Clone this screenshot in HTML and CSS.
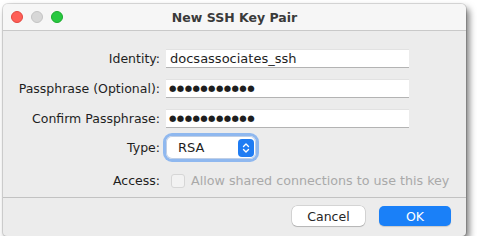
FILE: index.html
```html
<!DOCTYPE html>
<html lang="en">
<head>
  <meta charset="UTF-8">
  <title>New SSH Key Pair</title>
  <link rel="stylesheet" href="styles.css">
</head>
<body>
  <div class="window">
    <!-- Title bar -->
    <div class="titlebar">
      <div class="lights">
        <span class="light red"></span>
        <span class="light gray"></span>
        <span class="light green"></span>
      </div>
      <div class="title">New SSH Key Pair</div>
    </div>

    <!-- Form -->
    <div class="form">
      <label class="label">Identity:</label>
      <div class="field">docsassociates_ssh</div>

      <label class="label">Passphrase (Optional):</label>
      <div class="field dots">●●●●●●●●●●●</div>

      <label class="label">Confirm Passphrase:</label>
      <div class="field dots">●●●●●●●●●●●</div>

      <label class="label type-label">Type:</label>
      <div class="select-row">
        <div class="select">
          <span>RSA</span>
          <span class="stepper">
            <svg width="8" height="12" viewBox="0 0 8 12">
              <path d="M1.5 4.5 L4 2 L6.5 4.5 M1.5 7.5 L4 10 L6.5 7.5" fill="none" stroke="#fff" stroke-width="1.4" stroke-linecap="round" stroke-linejoin="round"/>
            </svg>
          </span>
        </div>
      </div>

      <label class="label access-label">Access:</label>
      <div class="check">
        <span class="box"></span>
        <span>Allow shared connections to use this key</span>
      </div>
    </div>

    <!-- Buttons -->
    <div class="footer">
      <button class="btn">Cancel</button>
      <button class="btn primary">OK</button>
    </div>
  </div>
</body>
</html>
```

FILE: styles.css
```css
* {
  margin: 0;
  padding: 0;
  box-sizing: border-box;
}
body {
  background: #fff;
  font-family: "DejaVu Sans", sans-serif;
  font-size: 12.5px;
  color: #1e1e1e;
  padding: 4px 0 0 3px;
}
.window {
  width: 463px;
  height: 232px;
  background: #ececec;
  border-radius: 5px 5px 4px 4px;
  box-shadow: 3px 4px 7px rgba(0, 0, 0, 0.55), 0 0 0 1px rgba(0, 0, 0, 0.12);
  display: flex;
  flex-direction: column;
  overflow: hidden;
}
.titlebar {
  height: 27px;
  background: #f6f6f6;
  border-bottom: 1px solid #c9c9c9;
  display: flex;
  align-items: center;
  position: relative;
}
.lights {
  display: flex;
  gap: 8px;
  padding-left: 8px;
}
.light {
  width: 12px;
  height: 12px;
  border-radius: 50%;
}
.red { background: #fe5f57; border: 1px solid #e2463f; }
.gray { background: #d7d7d7; border: 1px solid #c4c4c4; }
.green { background: #28c840; border: 1px solid #1aab2d; }
.title {
  position: absolute;
  left: 0;
  right: 0;
  text-align: center;
  font-weight: bold;
  font-size: 12.5px;
  color: #3a3a3a;
  pointer-events: none;
}
.form {
  display: grid;
  grid-template-columns: 157px 243px;
  column-gap: 6px;
  row-gap: 11px;
  padding-top: 18px;
  align-items: center;
}
.label {
  text-align: right;
  color: #1e1e1e;
  white-space: nowrap;
}
.field {
  height: 19px;
  background: #fff;
  border-top: 1px solid #e2e2e2;
  border-bottom: 1px solid #b3b3b3;
  padding: 0 4px;
  line-height: 17px;
  font-size: 13px;
}
.dots {
  font-size: 8.5px;
  letter-spacing: 0.4px;
  padding-left: 3px;
}
.type-label, .select-row {
  margin-top: -3px;
}
.select {
  width: 90px;
  height: 23px;
  border-radius: 6px;
  background: #fff;
  box-shadow: 0 0 0 3px #8fb8ef, inset 0 0 0 1px #c0cfe6;
  display: flex;
  align-items: center;
  justify-content: space-between;
  padding: 0 2px 0 12px;
  font-size: 13px;
}
.stepper {
  width: 16px;
  height: 18px;
  border-radius: 4px;
  background: #1f7cf3;
  display: flex;
  align-items: center;
  justify-content: center;
}
.access-label, .check {
  margin-top: 3px;
}
.check {
  display: flex;
  align-items: center;
  gap: 6px;
  color: #a9a9a9;
  white-space: nowrap;
  font-size: 12.7px;
}
.box {
  width: 14px;
  height: 14px;
  border: 1px solid #d6d6d6;
  border-radius: 3px;
  background: #f2f2f2;
  margin-left: 5px;
  flex-shrink: 0;
}
.footer {
  margin-top: auto;
  height: 39px;
  border-top: 1px solid #c2c2c2;
  display: flex;
  justify-content: flex-end;
  align-items: center;
  gap: 14px;
  padding: 0 15px 2px 0;
}
.btn {
  width: 73px;
  height: 20px;
  border: none;
  border-radius: 5px;
  background: #fff;
  box-shadow: 0 0 0 0.5px rgba(0, 0, 0, 0.2), 0 1px 1px rgba(0, 0, 0, 0.15);
  font-family: "DejaVu Sans", sans-serif;
  font-size: 12.5px;
  color: #262626;
}
.primary {
  width: 72px;
  background: #1a80f8;
  color: #fff;
  box-shadow: 0 1px 1px rgba(0, 0, 0, 0.15);
}
```
